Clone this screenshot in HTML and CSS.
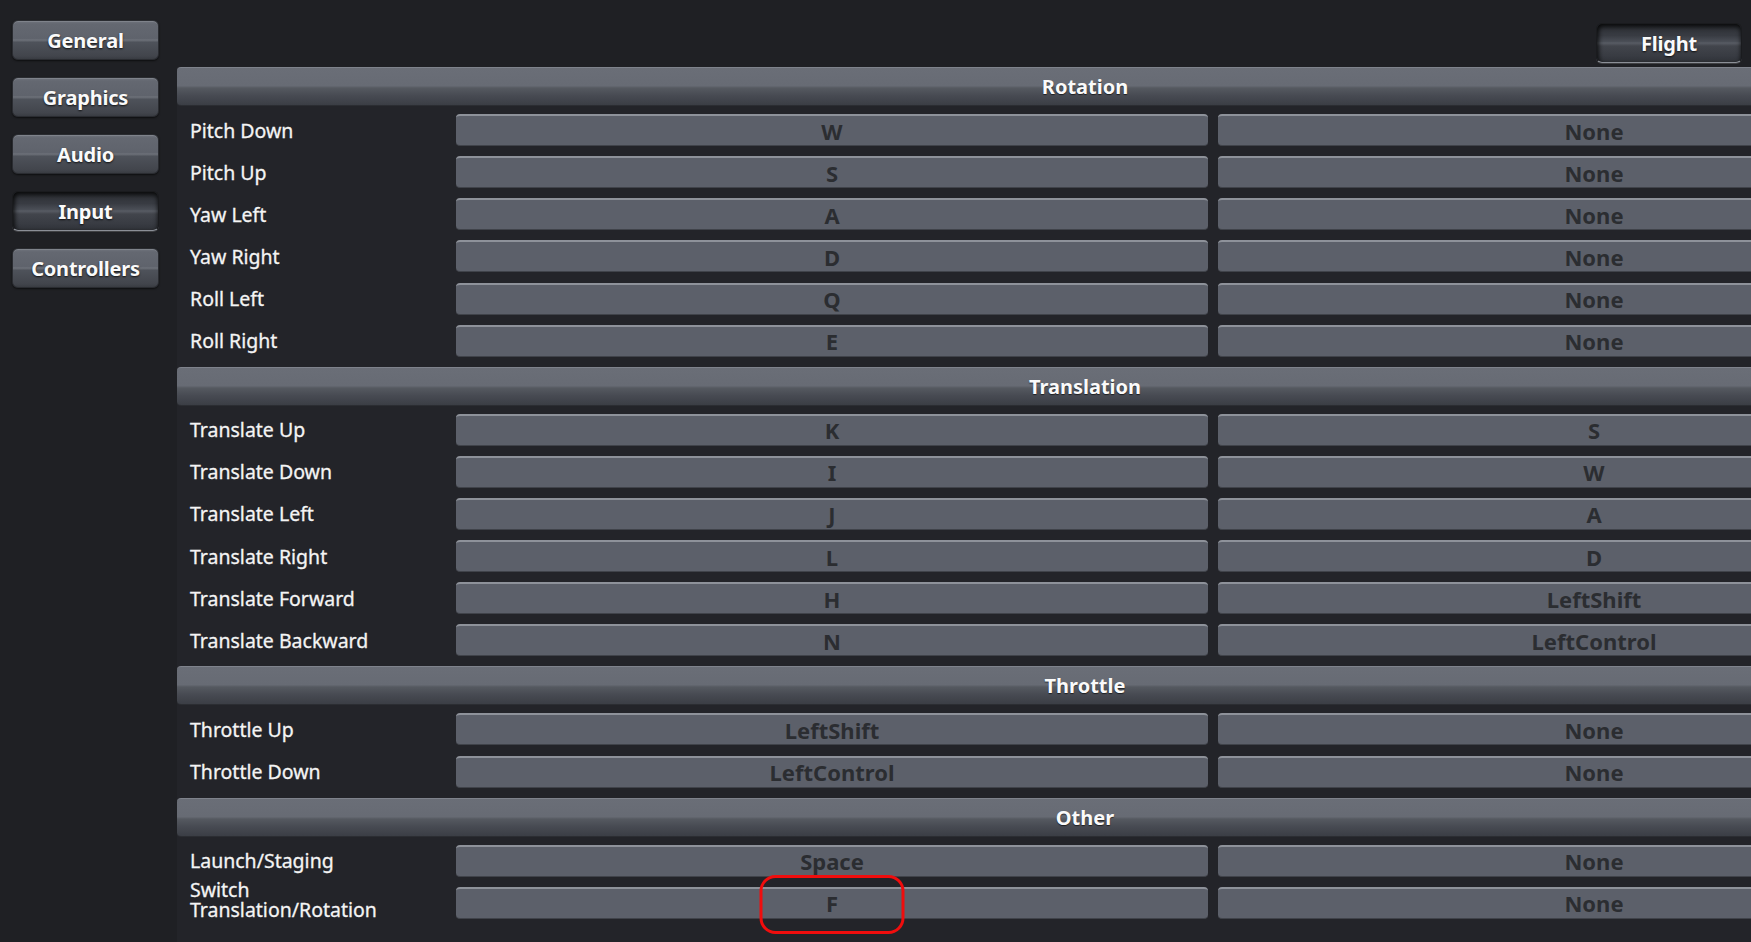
FILE: index.html
```html
<!DOCTYPE html>
<html>
<head>
<meta charset="utf-8">
<link rel="stylesheet" href="styles.css">
</head>
<body>
<div class="app">
  <nav class="sidebar">
    <div class="tab">General</div>
    <div class="tab">Graphics</div>
    <div class="tab">Audio</div>
    <div class="tab active">Input</div>
    <div class="tab">Controllers</div>
  </nav>
  <main class="main">
    <div class="topbar">
      <div class="tab active flight">Flight</div>
    </div>
    <div class="panel">
      <section class="section">
        <div class="header">Rotation</div>
        <div class="rows">
          <div class="row"><div class="label">Pitch Down</div><div class="key">W</div><div class="key">None</div></div>
          <div class="row"><div class="label">Pitch Up</div><div class="key">S</div><div class="key">None</div></div>
          <div class="row"><div class="label">Yaw Left</div><div class="key">A</div><div class="key">None</div></div>
          <div class="row"><div class="label">Yaw Right</div><div class="key">D</div><div class="key">None</div></div>
          <div class="row"><div class="label">Roll Left</div><div class="key">Q</div><div class="key">None</div></div>
          <div class="row"><div class="label">Roll Right</div><div class="key">E</div><div class="key">None</div></div>
        </div>
      </section>
      <section class="section">
        <div class="header">Translation</div>
        <div class="rows">
          <div class="row"><div class="label">Translate Up</div><div class="key">K</div><div class="key">S</div></div>
          <div class="row"><div class="label">Translate Down</div><div class="key">I</div><div class="key">W</div></div>
          <div class="row"><div class="label">Translate Left</div><div class="key">J</div><div class="key">A</div></div>
          <div class="row"><div class="label">Translate Right</div><div class="key">L</div><div class="key">D</div></div>
          <div class="row"><div class="label">Translate Forward</div><div class="key">H</div><div class="key">LeftShift</div></div>
          <div class="row"><div class="label">Translate Backward</div><div class="key">N</div><div class="key">LeftControl</div></div>
        </div>
      </section>
      <section class="section">
        <div class="header">Throttle</div>
        <div class="rows">
          <div class="row"><div class="label">Throttle Up</div><div class="key">LeftShift</div><div class="key">None</div></div>
          <div class="row"><div class="label">Throttle Down</div><div class="key">LeftControl</div><div class="key">None</div></div>
        </div>
      </section>
      <section class="section">
        <div class="header">Other</div>
        <div class="rows">
          <div class="row"><div class="label">Launch/Staging</div><div class="key">Space</div><div class="key">None</div></div>
          <div class="row"><div class="label two"><span class="line">Switch</span><span class="line">Translation/Rotation</span></div><div class="key highlighted">F<span class="mark"></span></div><div class="key">None</div></div>
        </div>
      </section>
    </div>
  </main>
</div>
</body>
</html>
```

FILE: styles.css
```css
html, body {
  margin: 0;
  padding: 0;
}
body {
  width: 1751px;
  height: 942px;
  overflow: hidden;
  background: #1f2024;
  font-family: "Noto Sans", "Open Sans", sans-serif;
  color: #f2f2f2;
}
.app {
  display: flex;
  align-items: flex-start;
  height: 942px;
}
.sidebar {
  width: 177px;
  flex-shrink: 0;
  box-sizing: border-box;
  padding: 20px 0 0 12px;
  display: flex;
  flex-direction: column;
  gap: 17px;
}
.tab {
  width: 147px;
  height: 40px;
  box-sizing: border-box;
  border: 1px solid #2a2c31;
  border-radius: 6px;
  background: linear-gradient(#70747d 0%, #646871 8%, #5f636c 46%, #6d7179 50%, #4e525a 56%, #42454c 92%, #393c42 100%);
  box-shadow: 0 1px 2px rgba(0,0,0,0.6), inset 0 1px 0 rgba(255,255,255,0.12);
  display: flex;
  align-items: center;
  justify-content: center;
  font-weight: 700;
  font-size: 20px;
  color: #fafafa;
  text-shadow: 0 1px 2px rgba(0,0,0,0.8);
  letter-spacing: -0.2px;
}
.tab.active {
  border: 1px solid #1a1b1e;
  border-bottom-color: #8b8f97;
  background: linear-gradient(#2d3035 0%, #383b42 30%, #4a4e56 46%, #585c64 50%, #42454c 58%, #363940 90%, #3c3f46 100%);
  box-shadow: inset 0 3px 5px rgba(0,0,0,0.7), inset 2px 0 4px rgba(0,0,0,0.5), 0 1px 0 rgba(255,255,255,0.15);
}
.main {
  width: 1816px;
  flex-shrink: 0;
  display: flex;
  flex-direction: column;
}
.topbar {
  width: 1574px;
  height: 67px;
  box-sizing: border-box;
  padding: 23px 9px 0 0;
  display: flex;
  justify-content: flex-end;
  align-items: flex-start;
}
.flight {
  width: 146px;
}
.panel {
  background: #232429;
  height: 875px;
}
.section {
  margin-bottom: 10px;
}
.header {
  height: 39px;
  box-sizing: border-box;
  border-radius: 4px 0 0 4px;
  border-top: 1px solid #7f838c;
  border-bottom: 1px solid #2b2d32;
  background: linear-gradient(#6a6e77 0%, #676b74 48%, #555960 54%, #474a52 75%, #3b3e45 100%);
  display: flex;
  align-items: center;
  justify-content: center;
  font-weight: 700;
  font-size: 20px;
  color: #fafafa;
  text-shadow: 0 1px 1px rgba(0,0,0,0.6);
}
.rows {
  margin-top: 8px;
  display: flex;
  flex-direction: column;
  gap: 10.15px;
}
.row {
  display: flex;
  align-items: center;
  height: 32px;
  gap: 10px;
}
.label {
  width: 269px;
  flex-shrink: 0;
  box-sizing: border-box;
  padding-left: 13px;
  font-size: 19.5px;
  color: #f4f4f4;
  white-space: nowrap;
  -webkit-text-stroke: 0.3px #f4f4f4;
}
.label.two {
  display: flex;
  flex-direction: column;
  margin-top: -6px;
}
.line {
  display: block;
  height: 20px;
  line-height: 20px;
}
.key {
  position: relative;
  width: 752px;
  height: 32px;
  flex-shrink: 0;
  box-sizing: border-box;
  border-radius: 4px;
  border-top: 2px solid #8e929a;
  border-bottom: 1px solid #40434a;
  background: #5c606a;
  display: flex;
  align-items: center;
  justify-content: center;
  font-weight: 700;
  font-size: 22px;
  color: #2b2d31;
  padding-top: 0;
}
.mark {
  position: absolute;
  left: 50%;
  top: -14px;
  width: 145px;
  height: 59px;
  transform: translateX(-50%);
  box-sizing: border-box;
  border: 3px solid #f00d0d;
  border-radius: 16px;
}
```
